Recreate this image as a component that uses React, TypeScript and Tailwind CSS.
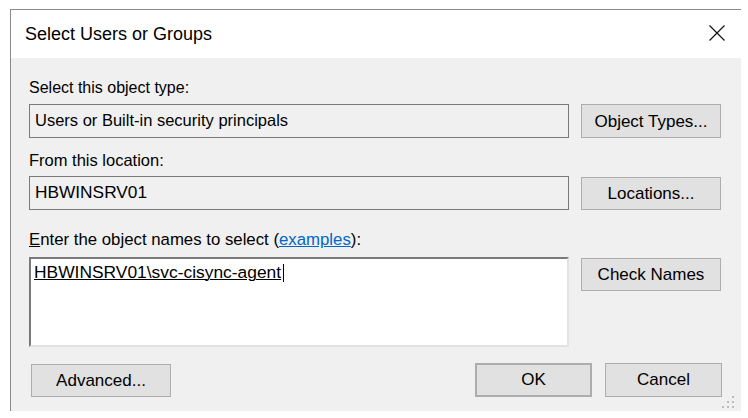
import React from "react";

function Btn({
  children,
  className = "",
}: {
  children: React.ReactNode;
  className?: string;
}) {
  return (
    <div
      className={
        "flex items-center justify-center bg-[#e1e1e1] border border-[#adadad] text-[17px] leading-[20px] text-black " +
        className
      }
    >
      {children}
    </div>
  );
}

export default function App() {
  return (
    <div className="w-[748px] h-[418px] bg-white pt-[9px] pl-[10px] font-['Liberation_Sans',Arial,sans-serif] text-black overflow-hidden">
      <div className="w-[731px] h-[402px] border-t border-l border-[#8a8a8a] flex flex-col">
        {/* Title bar */}
        <div className="h-[48px] shrink-0 bg-white flex items-center justify-between pl-[14px] pr-[16px]">
          <span className="text-[18px] leading-[20px]">Select Users or Groups</span>
          <svg width="16" height="16" viewBox="0 0 16 16" className="-mt-[2px]">
            <path d="M0.5 0.5 L15.5 15.5 M15.5 0.5 L0.5 15.5" stroke="#111" strokeWidth="1.2" fill="none" />
          </svg>
        </div>

        {/* Body */}
        <div className="relative flex-1 bg-[#f0f0f0] pl-[18px] pr-[20px] pt-[20px] flex flex-col">
          <div className="text-[16px] leading-[20px] h-[20px]">Select this object type:</div>
          <div className="mt-[6px] flex gap-[12px]">
            <div className="w-[540px] h-[34px] border border-[#7a7a7a] pl-[5px] pt-[4.5px] text-[16.5px] leading-[20px] whitespace-nowrap">
              Users or Built-in security principals
            </div>
            <Btn className="w-[140px] h-[34px] pt-[1px]">Object Types...</Btn>
          </div>

          <div className="mt-[12px] text-[16.5px] leading-[20px] h-[20px]">From this location:</div>
          <div className="mt-[6px] flex items-start gap-[12px]">
            <div className="w-[540px] h-[34px] border border-[#7a7a7a] pl-[5px] pt-[5px] text-[17.3px] leading-[20px] whitespace-nowrap">
              HBWINSRV01
            </div>
            <Btn className="w-[140px] h-[33px] mt-[1px]">Locations...</Btn>
          </div>

          <div className="mt-[20px] text-[16.8px] leading-[20px] h-[20px] whitespace-nowrap">
            <span className="underline">E</span>nter the object names to select (
            <span className="text-[#0066cc] underline">examples</span>):
          </div>
          <div className="mt-[7px] flex items-start gap-[12px]">
            <div className="w-[540px] h-[90px] bg-white border-2 border-t-[#7a7a7a] border-l-[#7a7a7a] border-r-[#e3e3e3] border-b-[#e3e3e3] pl-[3px] pt-[3px] text-[17.4px] leading-[20px] whitespace-nowrap">
              <span className="underline decoration-1">HBWINSRV01\svc-cisync-agent</span>
              <span className="inline-block w-[1px] h-[18px] bg-black align-[-4px] ml-[2px]" />
            </div>
            <Btn className="w-[140px] h-[33px] mt-[1px]">Check Names</Btn>
          </div>

          <div className="mt-[16px] flex items-start">
            <Btn className="w-[140px] h-[33px] mt-[1px] ml-[2px]">Advanced...</Btn>
            <div className="flex-1" />
            <Btn className="w-[117px] h-[34px] border-2 border-[#0078d7]">OK</Btn>
            <Btn className="w-[117px] h-[34px] ml-[13px] -mr-[1px]">Cancel</Btn>
          </div>

          <svg
            width="12"
            height="12"
            viewBox="0 0 12 12"
            className="absolute right-[7px] bottom-[3px]"
          >
            <g fill="#bdbdbd">
              <rect x="10" y="0" width="2" height="2" />
              <rect x="5" y="5" width="2" height="2" />
              <rect x="10" y="5" width="2" height="2" />
              <rect x="0" y="10" width="2" height="2" />
              <rect x="5" y="10" width="2" height="2" />
              <rect x="10" y="10" width="2" height="2" />
            </g>
          </svg>
        </div>
      </div>
    </div>
  );
}
